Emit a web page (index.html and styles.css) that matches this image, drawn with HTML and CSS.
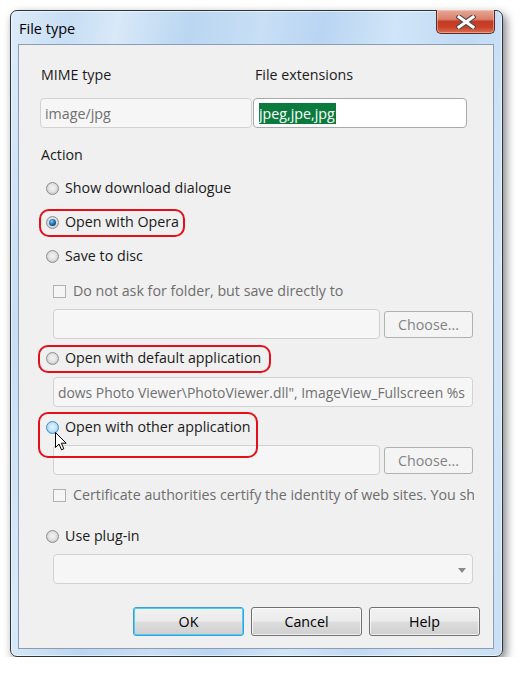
FILE: index.html
```html
<!DOCTYPE html>
<html>
<head>
<meta charset="utf-8">
<link rel="stylesheet" href="styles.css">
</head>
<body>
<div class="page">
  <div class="window">
    <div class="titlebar">
      <div class="title">File type</div>
      <div class="close">
        <svg width="20" height="14" viewBox="0 0 20 14">
          <path d="M3 2 L17 12 M17 2 L3 12" stroke="#4a4a4a" stroke-width="5.2" stroke-linecap="square"/>
          <path d="M3 2 L17 12 M17 2 L3 12" stroke="#ffffff" stroke-width="3" stroke-linecap="square"/>
        </svg>
      </div>
    </div>
    <div class="content">
      <div class="fields">
        <div class="field">
          <div class="lbl lbl-mime">MIME type</div>
          <div class="input disabled"><span class="val">image/jpg</span></div>
        </div>
        <div class="field">
          <div class="lbl lbl-ext">File extensions</div>
          <div class="input active"><span class="sel">jpeg,jpe,jpg</span></div>
        </div>
      </div>
      <div class="section-label">Action</div>
      <div class="options">
        <div class="row r1"><span class="radio"></span><span class="txt">Show download dialogue</span></div>
        <div class="row r2"><span class="radio checked"></span><span class="txt">Open with Opera</span><span class="ring ring-opera"></span></div>
        <div class="row r3"><span class="radio"></span><span class="txt">Save to disc</span></div>
        <div class="row sub c1"><span class="check"></span><span class="txt dim">Do not ask for folder, but save directly to</span></div>
        <div class="inrow i1"><div class="input disabled path"></div><div class="btn disabled-btn">Choose...</div></div>
        <div class="row r4"><span class="radio"></span><span class="txt">Open with default application</span><span class="ring ring-default"></span></div>
        <div class="input disabled wide i2"><span class="val clip">dows Photo Viewer\PhotoViewer.dll", ImageView_Fullscreen %s</span></div>
        <div class="row r5"><span class="radio hover"></span><span class="txt">Open with other application</span><span class="ring ring-other"></span>
          <svg class="cursor" width="13" height="19" viewBox="0 0 13 19">
            <path d="M0.5 0.5 L0.5 15.5 L4 12 L6.5 17.8 L8.8 16.8 L6.4 11.2 L11.2 11.2 Z" fill="#ffffff" stroke="#000000" stroke-width="1" stroke-linejoin="miter"/>
          </svg>
        </div>
        <div class="inrow i3"><div class="input disabled path"></div><div class="btn disabled-btn">Choose...</div></div>
        <div class="row sub c2"><span class="check"></span><span class="txt dim nowrap">Certificate authorities certify the identity of web sites. You sho</span></div>
        <div class="row r6"><span class="radio"></span><span class="txt">Use plug-in</span></div>
        <div class="input disabled wide select"><span class="arrow"></span></div>
      </div>
      <div class="buttons">
        <div class="btn default">OK</div>
        <div class="btn">Cancel</div>
        <div class="btn">Help</div>
      </div>
    </div>
  </div>
</div>
</body>
</html>
```

FILE: styles.css
```css
html, body {
  margin: 0;
  padding: 0;
  background: #ffffff;
}
body {
  font-family: "Open Sans", "Noto Sans", sans-serif;
  font-size: 14.25px;
  color: #1a1a1a;
}
.page {
  padding: 10px 0 0 10px;
}
.window {
  box-sizing: border-box;
  width: 493px;
  height: 647px;
  border: 1px solid #2e3338;
  border-radius: 7px;
  background: linear-gradient(100deg, #dcebf9 0%, #c8def4 10%, #d8e9f8 18%, #bad6f1 30%, #c8dff5 42%, #b9d5f2 52%, #d0e5f8 64%, #c0daf4 76%, #d4e7f8 88%, #c8dff5 100%);
  box-shadow: 3px 4px 10px rgba(0, 0, 0, 0.5), inset 0 0 0 1px rgba(255, 255, 255, 0.55);
  display: flex;
  flex-direction: column;
}
.titlebar {
  height: 33px;
  display: flex;
  align-items: flex-start;
  padding-left: 8px;
}
.title {
  margin-top: 8px;
  font-size: 14.5px;
  line-height: 20px;
  color: #000;
}
.close {
  margin-left: auto;
  margin-right: 7px;
  margin-top: -1px;
  width: 59px;
  height: 24px;
  box-sizing: border-box;
  border: 1px solid #5b2a22;
  border-top: none;
  border-radius: 0 0 5px 5px;
  background: linear-gradient(180deg, #e7a898 0%, #d9806b 40%, #c43a22 50%, #c9422a 75%, #dc6f52 100%);
  box-shadow: inset 0 0 0 1px rgba(255, 220, 210, 0.45);
  display: flex;
  align-items: center;
  justify-content: center;
}
.close svg {
  display: block;
}
.content {
  flex: 1;
  margin: 0 8px 7px 7px;
  border: 1px solid #8d9db1;
  background: #f0f0f0;
  display: flex;
  flex-direction: column;
}
.fields {
  display: grid;
  grid-template-columns: 212px 214px;
  column-gap: 1px;
  margin: 20px 0 0 21px;
}
.lbl {
  height: 20px;
  line-height: 20px;
  margin-bottom: 13px;
}
.lbl-mime { padding-left: 1px; }
.lbl-ext { padding-left: 2px; }
.input {
  box-sizing: border-box;
  height: 30px;
  border-radius: 4px;
  display: flex;
  align-items: center;
  overflow: hidden;
}
.input.disabled {
  background: #f6f6f6;
  border: 1px solid #d2d2d2;
  color: #707070;
}
.input.active {
  background: #ffffff;
  border: 1px solid #a9a9a9;
  padding-left: 5px;
}
.val {
  padding-left: 4px;
  white-space: nowrap;
}
.sel {
  background: #0b7b3d;
  color: #ffffff;
  line-height: 21px;
  padding-right: 1px;
}
.section-label {
  margin: 17px 0 0 22px;
  height: 20px;
  line-height: 20px;
}
.options {
  margin-left: 27px;
  display: flex;
  flex-direction: column;
  align-items: flex-start;
}
.row {
  position: relative;
  height: 24px;
  display: flex;
  align-items: center;
  white-space: nowrap;
}
.txt {
  margin-left: 6px;
  line-height: 20px;
}
.dim {
  color: #6d6d6d;
}
.r1 { margin-top: 11px; }
.r2 { margin-top: 10px; }
.r3 { margin-top: 10px; }
.c1 { margin-top: 11px; }
.i1 { margin-top: 6px; }
.r4 { margin-top: 7px; }
.i2 { margin-top: 7px; }
.r5 { margin-top: 8px; }
.i3 { margin-top: 6px; }
.c2 { margin-top: 8px; }
.r6 { margin-top: 17px; }
.select { margin-top: 6px; position: relative; }
.sub {
  margin-left: 7px;
  width: 421px;
  overflow: hidden;
}
.sub .txt {
  margin-left: 7px;
}
.radio {
  position: relative;
  width: 13px;
  height: 13px;
  box-sizing: border-box;
  border-radius: 50%;
  border: 1px solid #8e8f8f;
  background: radial-gradient(circle at 50% 45%, #f4f4f4 0%, #e4e4e4 45%, #c9c9c9 75%, #eeeeee 100%);
  flex: none;
}
.radio.checked::after {
  content: "";
  position: absolute;
  left: 2px;
  top: 2px;
  width: 7px;
  height: 7px;
  border-radius: 50%;
  background: radial-gradient(circle at 40% 35%, #8fd0f7 0%, #2c84c9 35%, #0d4a84 70%, #062a4d 100%);
}
.radio.hover {
  border-color: #3d8fc9;
  background: radial-gradient(circle at 50% 45%, #e7f5fd 0%, #c4e5f8 45%, #8fcbee 80%, #d6eefb 100%);
}
.check {
  width: 13px;
  height: 13px;
  box-sizing: border-box;
  border: 1px solid #b1b1b1;
  background: #f5f5f5;
  flex: none;
}
.inrow {
  display: flex;
  align-items: center;
  margin-left: 7px;
  gap: 4px;
}
.path {
  width: 327px;
}
.wide {
  width: 420px;
  margin-left: 7px;
}
.clip {
  overflow: hidden;
  font-size: 13.9px;
}
.btn {
  box-sizing: border-box;
  width: 111px;
  height: 29px;
  border: 1px solid #707070;
  border-radius: 3px;
  background: linear-gradient(180deg, #f2f2f2 0%, #ebebeb 48%, #dddddd 52%, #cfcfcf 100%);
  box-shadow: inset 0 0 0 1px rgba(255, 255, 255, 0.7);
  display: flex;
  align-items: center;
  justify-content: center;
  color: #000;
}
.btn.default {
  border-color: #3c9fd6;
  box-shadow: inset 0 0 0 1px #4ad0f5;
}
.disabled-btn {
  width: 89px;
  height: 27px;
  border-color: #adb2b5;
  background: #f4f4f4;
  box-shadow: none;
  color: #838383;
}
.buttons {
  display: flex;
  justify-content: flex-end;
  gap: 7px;
  margin-top: 23px;
  padding-right: 13px;
}
.arrow {
  position: absolute;
  right: 6px;
  top: 13px;
  width: 0;
  height: 0;
  border-left: 4px solid transparent;
  border-right: 4px solid transparent;
  border-top: 5px solid #8a8a8a;
}
.ring {
  position: absolute;
  box-sizing: border-box;
  border: 2px solid #e3101c;
  border-radius: 10px;
  pointer-events: none;
}
.ring-opera {
  left: -7px;
  top: -1px;
  width: 146px;
  height: 28px;
}
.ring-default {
  left: -8px;
  top: -1px;
  width: 233px;
  height: 28px;
}
.ring-other {
  left: -8px;
  top: -3px;
  width: 220px;
  height: 46px;
}
.cursor {
  position: absolute;
  left: 9px;
  top: 17px;
}
```
